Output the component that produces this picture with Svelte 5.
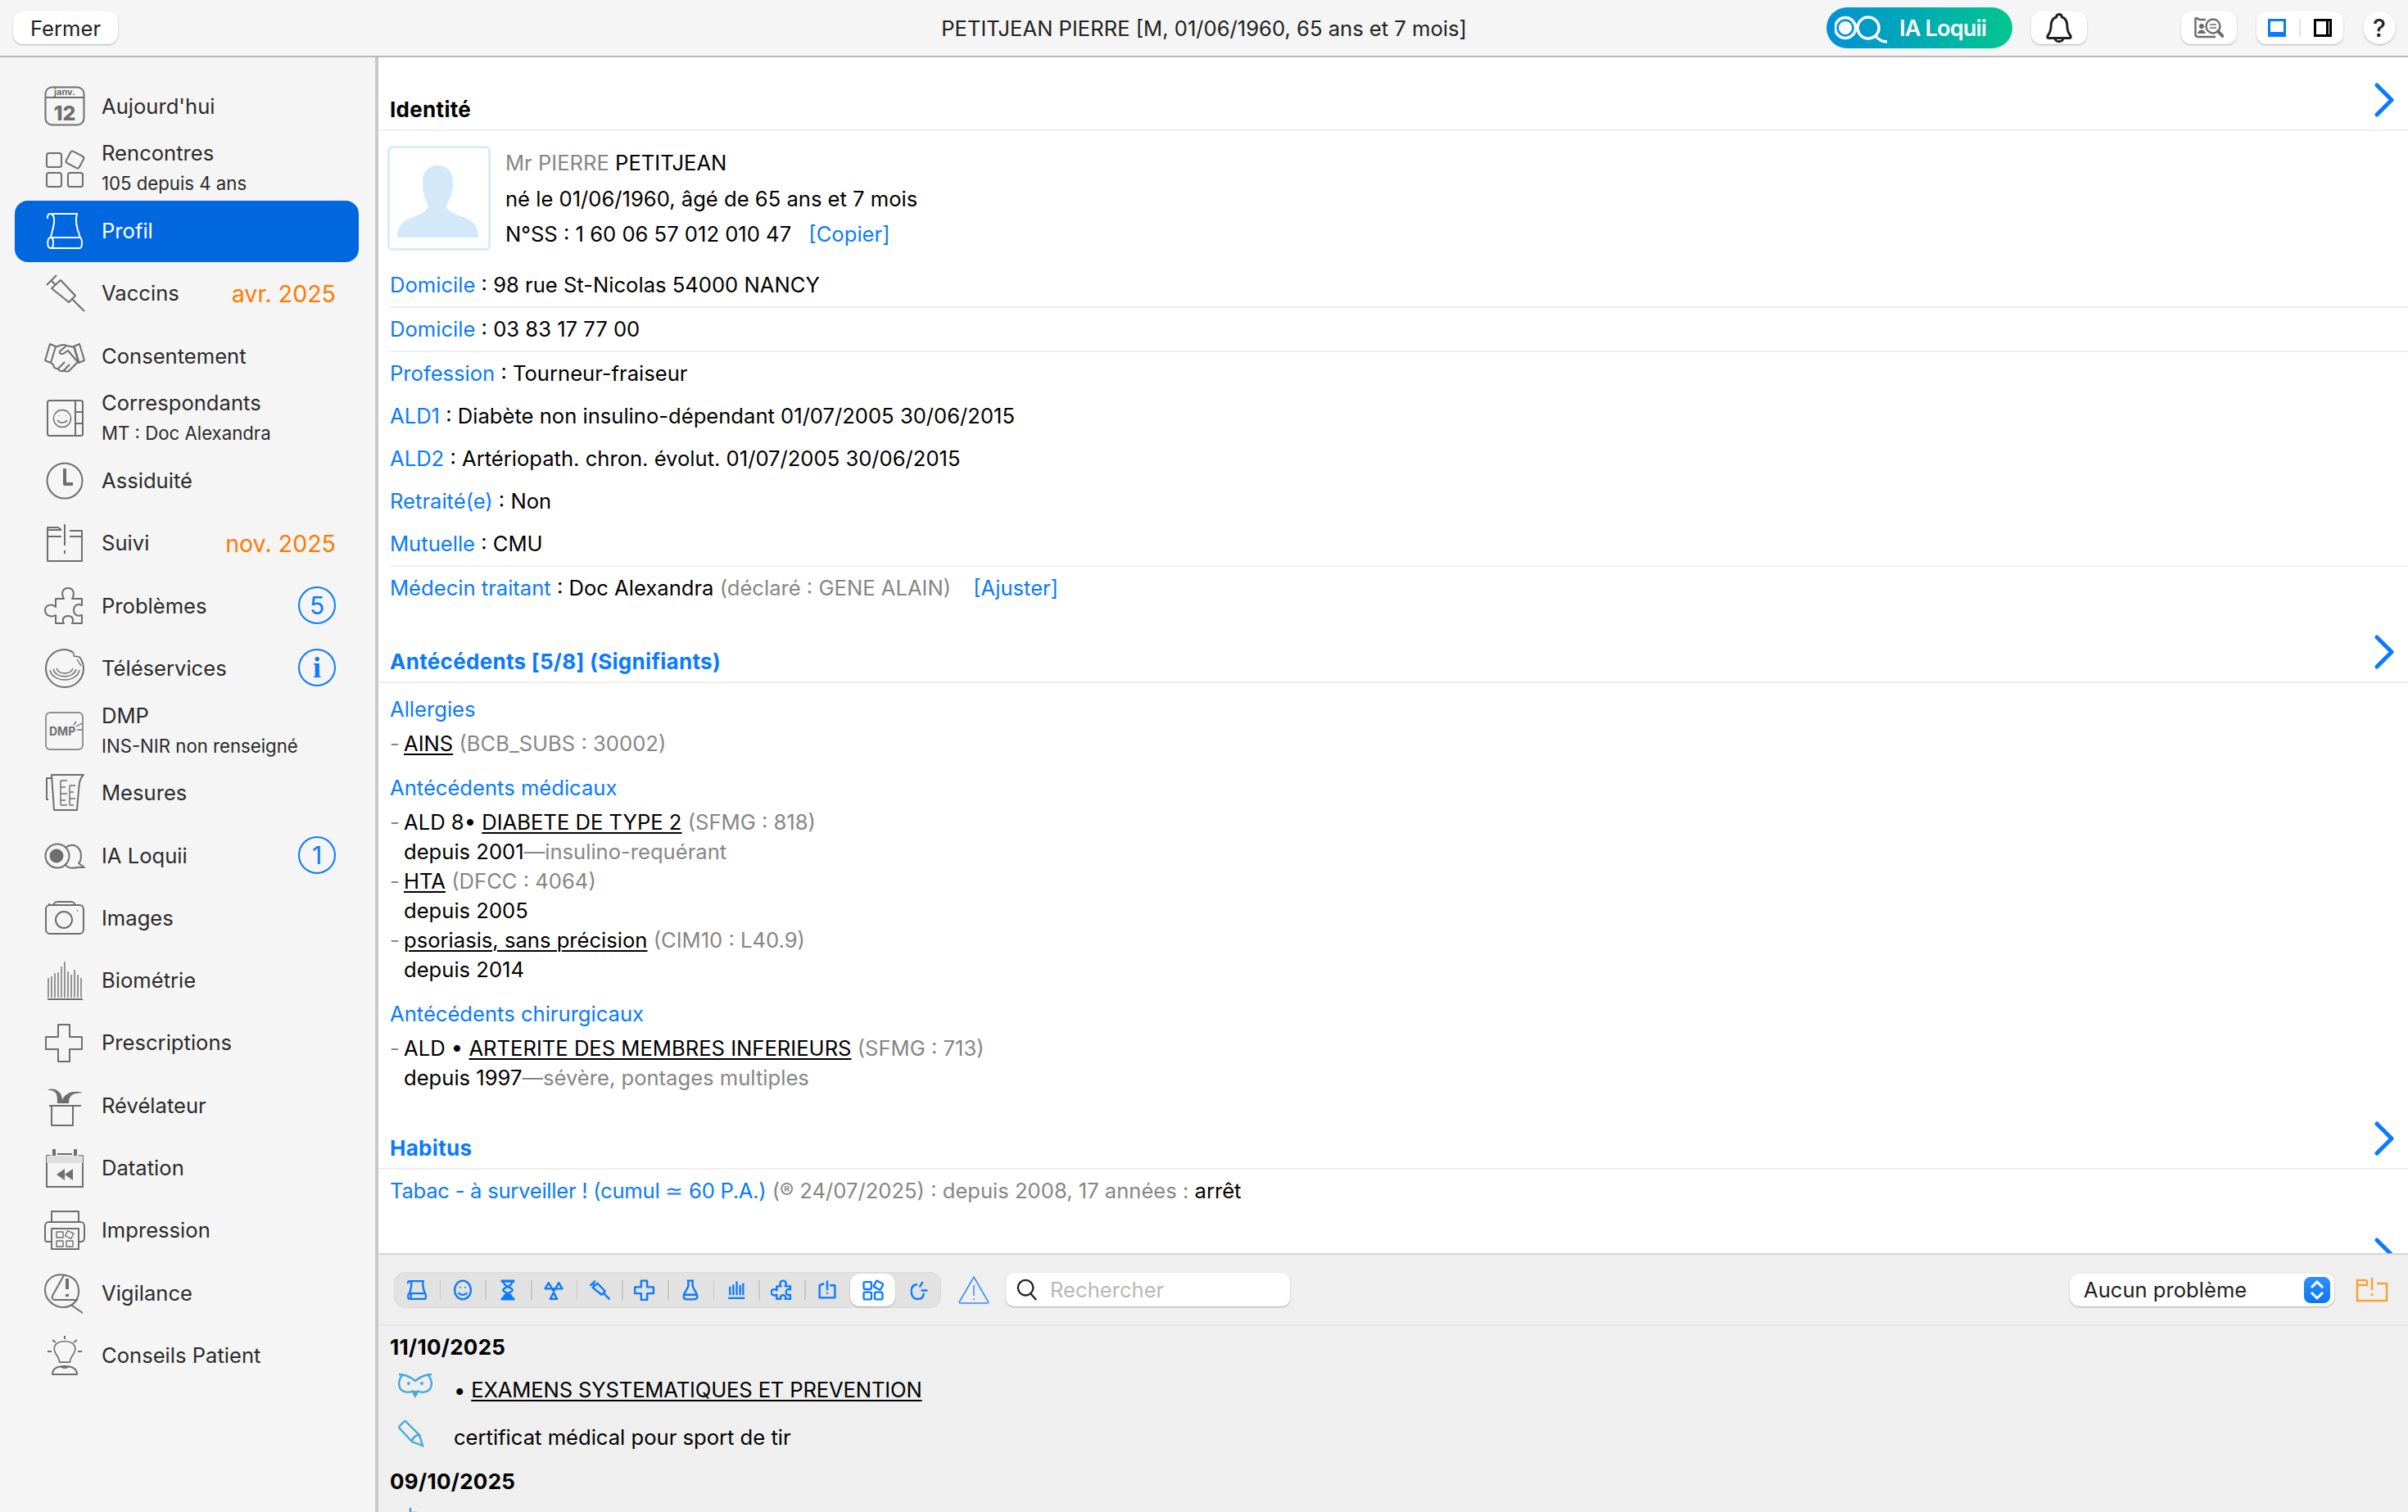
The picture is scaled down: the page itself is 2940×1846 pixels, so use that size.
<script>
  const rows = [
    { icon: 'cal', label: "Aujourd'hui" },
    { icon: 'grid', label: 'Rencontres', sub: '105 depuis 4 ans' },
    { icon: 'scroll', label: 'Profil', active: true },
    { icon: 'syringe', label: 'Vaccins', date: 'avr. 2025' },
    { icon: 'hands', label: 'Consentement' },
    { icon: 'book', label: 'Correspondants', sub: 'MT : Doc Alexandra' },
    { icon: 'clock', label: 'Assiduité' },
    { icon: 'folder', label: 'Suivi', date: 'nov. 2025' },
    { icon: 'puzzle', label: 'Problèmes', badge: '5' },
    { icon: 'tele', label: 'Téléservices', badge: 'i' },
    { icon: 'dmp', label: 'DMP', sub: 'INS-NIR non renseigné' },
    { icon: 'beaker', label: 'Mesures' },
    { icon: 'loqui', label: 'IA Loquii', badge: '1' },
    { icon: 'camera', label: 'Images' },
    { icon: 'bars', label: 'Biométrie' },
    { icon: 'cross', label: 'Prescriptions' },
    { icon: 'hat', label: 'Révélateur' },
    { icon: 'rewind', label: 'Datation' },
    { icon: 'printer', label: 'Impression' },
    { icon: 'vigil', label: 'Vigilance' },
    { icon: 'bulb', label: 'Conseils Patient' }
  ];
  const tools = ['scroll', 'smile', 'hourglass', 'radiation', 'syringe', 'cross', 'flask', 'bars2', 'puzzle', 'folder2', 'grid', 'pointer'];
</script>

{#snippet glyph(n)}
  {#if n === 'cal'}
    <rect x="1.5" y="1.5" width="47" height="46" rx="8" />
    <path d="M1.5 14H48.5" />
    <text x="25" y="11" class="t-cal-m">janv.</text>
    <text x="25" y="42" class="t-cal-d">12</text>
  {:else if n === 'grid'}
    <rect x="3" y="6" width="18" height="17" rx="2.5" />
    <rect x="3" y="30" width="18" height="17" rx="2.5" />
    <rect x="29" y="30" width="18" height="17" rx="2.5" />
    <rect x="28.5" y="6" width="18" height="16" rx="2.5" transform="rotate(28 37.5 14)" />
  {:else if n === 'scroll'}
    <path d="M10 4H40C37 13 40 23 44 33M4 10C3 2 11 2 12 10C13 18 9 26 8 33M8 33H43C47 33 47 46 43 46H8C3 46 3 33 8 33ZM8 33C12 33 12 46 8 46" />
  {:else if n === 'syringe'}
    <path d="M3 15L15 3M8 9L13 14M9 19L20 9L38 28L30 36ZM34 32L49 47" />
  {:else if n === 'hands'}
    <path d="M1 30L7 10L14 13L8 33ZM49 30L43 10L36 13L42 33ZM14 14C20 11 24 10 27 12L37 14L42 31L31 42C28 45 25 43 24 42C21 45 18 42 17 40C14 41 11 38 11 35L8 33M27 12L19 19C18 23 23 23 26 20L29 18L40 31M24 42L31 35M17 40L25 32" />
  {:else if n === 'book'}
    <rect x="4" y="3" width="43" height="43" rx="2.5" />
    <path d="M38 3V46M38 17H47M38 31H47" />
    <circle cx="22" cy="25" r="10.5" class="thin" />
    <path class="thin" d="M16 27C19 31 25 31 28 27M18 21.5h.5M26 21.5h.5" />
  {:else if n === 'clock'}
    <circle cx="25" cy="25" r="21.5" />
    <path class="thick" d="M25 10V29H35" />
  {:else if n === 'folder'}
    <path d="M21 9H4V47H46V10H31M4 17H21M31 17H46M4 9V6H17L21 9" />
    <path d="M25 2V28M25 34V38" />
  {:else if n === 'folder2'}
    <path d="M18 11H12L9 14H7V43H43V14H31M25 3V26M25 31V34" />
  {:else if n === 'puzzle'}
    <path d="M14 16H24C20 9 23 3 29 3C35 3 38 9 34 16H46V24C40 21 36 25 36 30C36 35 40 38 46 36V46H34C37 41 34 37 29 37C24 37 21 41 24 46H14V36C9 39 1 37 1 30C1 24 9 21 14 26Z" />
  {:else if n === 'tele'}
    <path d="M36 6C31 3 28 2 25 2C12 2 2 12 2 25C2 38 12 48 25 48C38 48 48 38 48 25C48 20 46 15 43 11" />
    <path class="thin" d="M36 6L36 10L43 11M40 14L45 22M7 27C10 43 40 43 43 27M11 26C14 38 36 38 39 26M15 25C18 33 32 33 35 25" />
  {:else if n === 'dmp'}
    <rect x="2" y="3" width="45" height="45" rx="5" class="thin" />
    <text x="6" y="31" class="t-dmp">DMP</text>
    <path class="thin" d="M39 20L46 16M40 24L47 24M36 18L39 14" />
  {:else if n === 'beaker'}
    <path d="M9 3H48C43 8 43 12 42 22L40 46H12ZM9 7H3V33H5" />
    <path class="thin" d="M20 10V40M20 10H28M20 18H26M20 26H28M20 34H26M20 40H28M31 16V40M31 16H38M31 24H36M31 32H38M31 40H36" />
  {:else if n === 'loqui'}
    <circle cx="16" cy="25" r="14.5" />
    <circle cx="15" cy="25" r="8.5" class="fill" />
    <path d="M27 14C38 8 45 16 45 25C45 29 44 32 42 34L49 39H40C33 41 28 39 25 35" />
  {:else if n === 'camera'}
    <rect x="2" y="9" width="46" height="35" rx="5" />
    <circle cx="24" cy="27" r="10" />
    <path d="M6 9V7M11 9C13 5 14 5 17 5H32C35 5 36 5 38 9M40 16h1" />
  {:else if n === 'bars'}
    <path class="thin" d="M5 46V22M9 46V20M13 46V16M17 46V15M21 46V8M25 46V2M29 46V14M33 46V18M37 46V12M41 46V18M45 46V22" />
    <path d="M4 48H47" />
  {:else if n === 'bars2'}
    <path d="M10 37V17M18 37V12M26 37V5M34 37V13M41 37V9M6 44H45" />
  {:else if n === 'cross'}
    <path d="M17 3H31V18H46V33H31V48H17V33H2V18H17Z" />
  {:else if n === 'hat'}
    <path d="M6 25H45M9 25V49H35V25" />
    <path class="fill" d="M16 22C16 12 16 6 4 6C10 2 22 6 22 18C26 8 38 6 47 9L39 10C32 11 30 16 30 22Z" />
  {:else if n === 'rewind'}
    <path d="M8 10H3V48H47V10H42M16 8H34" />
    <path class="thick" d="M12 2V12M38 2V12" />
    <rect x="3" y="10" width="44" height="9" class="fillsoft" />
    <path class="fill" d="M15 33L25 26V40ZM25 33L35 26V40Z" />
  {:else if n === 'printer'}
    <path d="M9 15V2H42V15M9 39H3C1 39 1 37 1 35V20C1 17 3 15 5 15H45C47 15 49 17 49 20V35C49 37 47 39 45 39H42M9 23H42V48H9Z" />
    <g class="thin">
      <rect x="15" y="27" width="8" height="7" />
      <rect x="15" y="38" width="8" height="7" />
      <rect x="27" y="38" width="8" height="7" />
      <rect x="27" y="27" width="8" height="7" transform="rotate(25 31 30)" />
    </g>
  {:else if n === 'vigil'}
    <path d="M26 3C12 0 1 8 1 21C1 33 12 42 23 42C36 42 43 32 42 20C41 10 36 5 26 3ZM34 40L47 49" />
    <path d="M24 3L10 28C9 31 10 33 13 33H41" />
    <path class="thick" d="M28 7V20M28 26V29" />
  {:else if n === 'bulb'}
    <path d="M17 37C17 29 9 24 9 17C9 9 16 5 25 5C34 5 41 9 41 17C41 24 33 29 33 37Z" transform="translate(5 3.5) scale(.8)" />
    <path d="M10 48C10 41 16 38 25 38C34 38 40 41 40 48ZM25 1V5M10 6L14 9M40 6L36 9M4 20H9M41 20H46" />
    <path class="fill" d="M19 38H31C30 42 20 42 19 38Z" />
  {:else if n === 'smile'}
    <ellipse cx="25" cy="25" rx="19" ry="22" />
    <path d="M15 31C20 38 30 38 35 31M19 18V20M31 18V20" />
  {:else if n === 'hourglass'}
    <path class="thick" d="M9 4H41M9 46H41" />
    <path d="M14 4C14 18 36 18 36 25C36 32 14 32 14 46M36 4C36 18 14 18 14 25C14 32 36 32 36 46" />
    <path class="fill" d="M25 30L37 46H13Z" />
  {:else if n === 'radiation'}
    <path d="M13 8L5 22H21ZM37 8L29 22H45ZM25 31L17 46H33Z" />
    <circle cx="25" cy="24" r="2.5" />
  {:else if n === 'flask'}
    <path d="M17 3H33M20 3V14C20 22 9 30 9 40C9 45 13 47 17 47H33C37 47 41 45 41 40C41 30 30 22 30 14V3M11 36H39" />
  {:else if n === 'pointer'}
    <path d="M23 12C14 12 9 18 9 28C9 38 14 46 24 46C34 46 38 40 38 32M28 18L36 6M32 26H47" />
  {/if}
{/snippet}

<div class="app">
  <header class="top">
    <div class="top-left"><button class="btn fermer">Fermer</button></div>
    <div class="title">PETITJEAN PIERRE [M, 01/06/1960, 65 ans et 7 mois]</div>
    <div class="top-right">
      <div class="pill">
        <svg class="pill-logo" viewBox="0 0 64 46">
          <circle cx="41" cy="23" r="13" />
          <circle cx="13" cy="23" r="12.5" />
          <circle cx="13" cy="23" r="8" class="pl-dot" />
          <path d="M50 33C54 38 58 40 64 40" />
        </svg>
        <span>IA Loquii</span>
      </div>
      <button class="btn bell" aria-label="Alertes">
        <svg viewBox="0 0 40 46" class="ico-bell">
          <path d="M20 3C23 3 24 5 24 7C30 9 32 14 32 21C32 28 34 31 37 35C38 37 37 38 35 38H5C3 38 2 37 3 35C6 31 8 28 8 21C8 14 10 9 16 7C16 5 17 3 20 3ZM14 38C14 45 26 45 26 38" />
        </svg>
      </button>
      <button class="btn docsearch" aria-label="Dossier">
        <svg viewBox="0 0 36 26" class="ico-doc">
          <path d="M14 3H6L4 1.5H1.5V21C1.5 23 3 24 5 24H26" />
          <circle cx="23" cy="11" r="8.5" />
          <path d="M29 17L34.5 23" class="h" />
          <path class="t" d="M19 9H27M19 13H27" />
          <circle cx="9" cy="11" r="3" class="dark" />
          <path class="dark" d="M4 20C5 14 13 14 14 20Z" />
        </svg>
      </button>
      <div class="btn seg-view">
        <svg viewBox="0 0 22 22" class="ico-view blue"><rect x="1.5" y="1.5" width="19" height="19" /><rect x="3" y="16" width="16" height="3" class="solid" /></svg>
        <i class="v-sep"></i>
        <svg viewBox="0 0 22 22" class="ico-view"><rect x="1.5" y="1.5" width="19" height="19" /><rect x="15" y="3" width="3" height="16" class="solid" /></svg>
      </div>
      <button class="btn help">?</button>
    </div>
  </header>

  <div class="body">
    <nav class="side">
      {#each rows as r}
        <div class="row" class:active={r.active}>
          <svg class="ico" viewBox="0 0 50 50">{@render glyph(r.icon)}</svg>
          <div class="labels">
            <div class="label">{r.label}</div>
            {#if r.sub}<div class="sub">{r.sub}</div>{/if}
          </div>
          {#if r.date}<div class="date">{r.date}</div>{/if}
          {#if r.badge}<div class="badge" class:info={r.badge === 'i'}>{r.badge}</div>{/if}
        </div>
      {/each}
    </nav>

    <main class="main">
      <section class="upper">
        <div class="head">
          <h2>Identité</h2>
          <svg class="chev" viewBox="0 0 26 42"><path d="M4 3L22 21L4 39" /></svg>
        </div>
        <div class="identity">
          <div class="photo">
            <svg viewBox="0 0 120 122"><path d="M40 42C40 27 48 21 58 21C69 21 77 27 77 42C77 55 73 63 69 69C69 75 75 79 87 83C101 88 108 93 108 109H9C9 93 17 88 31 83C41 79 47 75 47 69C43 63 40 55 40 42Z" /></svg>
          </div>
          <div class="id-lines">
            <div><span class="grey">Mr PIERRE</span> PETITJEAN</div>
            <div>né le 01/06/1960, âgé de 65 ans et 7 mois</div>
            <div>N°SS : 1 60 06 57 012 010 47 <a class="copy">[Copier]</a></div>
          </div>
        </div>
        <div class="rows">
          <div class="line sep"><a>Domicile</a> : 98 rue St-Nicolas 54000 NANCY</div>
          <div class="line sep"><a>Domicile</a> : 03 83 17 77 00</div>
          <div class="line"><a>Profession</a> : Tourneur-fraiseur</div>
          <div class="line"><a>ALD1</a> : Diabète non insulino-dépendant 01/07/2005 30/06/2015</div>
          <div class="line"><a>ALD2</a> : Artériopath. chron. évolut. 01/07/2005 30/06/2015</div>
          <div class="line"><a>Retraité(e)</a> : Non</div>
          <div class="line sep"><a>Mutuelle</a> : CMU</div>
          <div class="line"><a>Médecin traitant</a> : Doc Alexandra <span class="grey">(déclaré : GENE ALAIN)</span> <a class="adj">[Ajuster]</a></div>
        </div>

        <div class="head">
          <h2 class="blue-h">Antécédents [5/8] (Signifiants)</h2>
          <svg class="chev" viewBox="0 0 26 42"><path d="M4 3L22 21L4 39" /></svg>
        </div>
        <div class="ant">
          <h3>Allergies</h3>
          <ul>
            <li><b>-</b><u>AINS</u> <span class="grey">(BCB_SUBS : 30002)</span></li>
          </ul>
          <h3>Antécédents médicaux</h3>
          <ul>
            <li><b>-</b>ALD 8• <u>DIABETE DE TYPE 2</u> <span class="grey">(SFMG : 818)</span></li>
            <li class="ind">depuis 2001<span class="grey">—insulino-requérant</span></li>
            <li><b>-</b><u>HTA</u> <span class="grey">(DFCC : 4064)</span></li>
            <li class="ind">depuis 2005</li>
            <li><b>-</b><u>psoriasis, sans précision</u> <span class="grey">(CIM10 : L40.9)</span></li>
            <li class="ind">depuis 2014</li>
          </ul>
          <h3>Antécédents chirurgicaux</h3>
          <ul>
            <li><b>-</b>ALD • <u>ARTERITE DES MEMBRES INFERIEURS</u> <span class="grey">(SFMG : 713)</span></li>
            <li class="ind">depuis 1997<span class="grey">—sévère, pontages multiples</span></li>
          </ul>
        </div>

        <div class="head">
          <h2 class="blue-h">Habitus</h2>
          <svg class="chev" viewBox="0 0 26 42"><path d="M4 3L22 21L4 39" /></svg>
        </div>
        <div class="line"><a class="tight">Tabac - à surveiller ! (cumul ≃ 60 P.A.)</a> <span class="grey">(® 24/07/2025) : depuis 2008, 17 années :</span> arrêt</div>
        <div class="head"><h2>&nbsp;</h2><svg class="chev" viewBox="0 0 26 42"><path d="M4 3L22 21L4 39" /></svg></div>
      </section>

      <section class="lower">
        <div class="toolbar">
          <div class="tools">
            {#each tools as t}
              <div class="tool" class:on={t === 'grid'}>
                <svg viewBox="0 0 50 50">{@render glyph(t)}</svg>
              </div>
            {/each}
          </div>
          <svg class="warn" viewBox="0 0 38 34"><path d="M19 1L1 32C1 33 2 33 3 33H35C36 33 37 33 37 32ZM19 11V24M19 27V29" /></svg>
          <div class="search">
            <svg viewBox="0 0 28 30"><circle cx="12" cy="12" r="10" /><path d="M19 20L26 28" /></svg>
            <span>Rechercher</span>
          </div>
          <div class="select">
            <span>Aucun problème</span>
            <div class="stepper"><svg viewBox="0 0 32 32"><path d="M9 13L16 6L23 13M9 19L16 26L23 19" /></svg></div>
          </div>
          <svg class="orange" viewBox="0 0 40 30"><path d="M14 3H2V28H38V7H26M2 9H14L14 3M20 0V15M20 19V22" /></svg>
        </div>
        <div class="journal">
          <div class="jdate">11/10/2025</div>
          <div class="entry">
            <svg class="e-ico" viewBox="0 0 42 34">
              <path d="M1 2C8 2 14 4 21 10C28 4 34 2 41 2M5 3C0 9 0 17 4 21C9 25 15 24 19 22M37 3C42 9 42 17 38 21C33 25 27 24 23 22" />
              <path class="e-fill" d="M16 22H26L21 31Z" />
              <circle cx="13" cy="13" r="2" class="e-fill" />
              <circle cx="29" cy="13" r="2" class="e-fill" />
            </svg>
            <span class="caps">• <u>EXAMENS SYSTEMATIQUES ET PREVENTION</u></span>
          </div>
          <div class="entry">
            <svg class="e-ico" viewBox="0 0 42 34">
              <path d="M2 7L7 2C8 1 9 1 10 2L26 18L30 31L17 26L2 10C1 9 1 8 2 7ZM17 25C18 21 22 18 26 18" />
            </svg>
            <span>certificat médical pour sport de tir</span>
          </div>
          <div class="jdate second">09/10/2025</div>
          <svg class="e-ico peek" viewBox="0 0 42 34"><path d="M15 2V34M15 8L23 8" /></svg>
        </div>
      </section>
    </main>
  </div>
</div>

<style>
  :global(body) { margin: 0; background: #f5f5f5; }
  .app {
    width: 2940px;
    height: 1846px;
    overflow: hidden;
    display: flex;
    flex-direction: column;
    font-family: Inter, "Liberation Sans", sans-serif;
    font-size: 25.6px;
    color: #000;
  }
  a { color: #0a7aff; }
  u { text-underline-offset: 3px; text-decoration-thickness: 2px; }

  /* top bar */
  .top {
    height: 68px;
    flex: none;
    display: grid;
    grid-template-columns: 1fr auto 1fr;
    align-items: center;
    background: #f5f5f5;
    border-bottom: 2px solid #b9b9b9;
  }
  .top-left { padding-left: 16px; }
  .title { color: #222; }
  .btn {
    display: flex;
    align-items: center;
    justify-content: center;
    height: 40px;
    padding: 0;
    border: 0;
    border-radius: 12px;
    background: #fff;
    box-shadow: 0 1px 2px rgba(0, 0, 0, .28);
    font: inherit;
    color: #222;
    box-sizing: border-box;
  }
  .fermer { width: 128px; }
  .top-right { display: flex; align-items: center; justify-content: flex-end; padding-right: 15px; }
  .pill {
    width: 227px;
    height: 50px;
    border-radius: 25px;
    background: linear-gradient(90deg, #0090d6, #00c68f);
    color: #fff;
    display: flex;
    align-items: center;
    padding-left: 10px;
    box-sizing: border-box;
    font-size: 27px;
    font-weight: 600;
    letter-spacing: -0.8px;
  }
  .pill-logo { width: 64px; height: 46px; margin-right: 15px; fill: none; stroke: #fff; stroke-width: 3.5; }
  .pl-dot { fill: #fff; stroke: none; }
  .bell { width: 68px; margin-left: 23px; }
  .ico-bell { width: 34px; height: 38px; fill: none; stroke: #222; stroke-width: 3.6; stroke-linejoin: round; }
  .docsearch { width: 68px; margin-left: 115px; }
  .ico-doc { width: 36px; height: 26px; fill: none; stroke: #6b6b6b; stroke-width: 2.4; }
  .ico-doc .dark { fill: #6b6b6b; stroke: none; }
  .ico-doc .h { stroke-width: 4; stroke-linecap: round; }
  .ico-doc .t { stroke-width: 1.6; }
  .seg-view { width: 106px; margin-left: 24px; gap: 16px; }
  .ico-view { width: 22px; height: 22px; fill: none; stroke: #000; stroke-width: 3; }
  .ico-view .solid { fill: #000; stroke: none; }
  .ico-view.blue { stroke: #0a7aff; }
  .ico-view.blue .solid { fill: #0a7aff; }
  .v-sep { width: 2px; height: 22px; background: #e2e2e2; }
  .help { width: 40px; margin-left: 24px; border-radius: 20px; font-size: 30px; font-weight: 500; }

  .body { flex: 1; display: flex; min-height: 0; }

  /* sidebar */
  .side {
    width: 458px;
    flex: none;
    box-sizing: border-box;
    padding: 22px 20px 0 18px;
    background: #f5f5f5;
    display: grid;
    grid-auto-rows: 75px;
    row-gap: 1.27px;
    align-content: start;
  }
  .row {
    display: flex;
    align-items: center;
    padding: 0 28px 0 36px;
    border-radius: 16px;
    color: #2b2b2b;
  }
  .row.active { background: #0067de; color: #fff; }
  .ico {
    width: 50px;
    height: 50px;
    flex: none;
    margin-right: 20px;
    fill: none;
    stroke: #6e6e6e;
    stroke-width: 2;
    stroke-linejoin: round;
  }
  .row.active .ico { stroke: #fff; }
  .ico text { stroke: none; fill: #6e6e6e; }
  .t-cal-m { font-size: 11px; font-weight: 700; text-anchor: middle; }
  .t-cal-d { font-size: 25px; font-weight: 800; text-anchor: middle; }
  .t-dmp { font-size: 14px; font-weight: 700; }
  .thin { stroke-width: 1.4; }
  .thick { stroke-width: 4; }
  .fill { fill: currentColor; stroke: none; color: #6e6e6e; }
  .fillsoft { fill: #dedede; stroke: none; }
  .labels { flex: 1; min-width: 0; }
  .label { line-height: 36px; }
  .sub { line-height: 37px; font-size: 22.2px; }
  .date { color: #ff7a00; font-size: 28.6px; }
  .badge {
    width: 46px;
    height: 46px;
    box-sizing: border-box;
    border: 2.5px solid #0a7aff;
    border-radius: 50%;
    color: #0a7aff;
    font-size: 30px;
    display: flex;
    align-items: center;
    justify-content: center;
    position: relative;
    top: -1px;
  }
  .badge.info { font-family: "Liberation Serif", serif; font-weight: 700; font-size: 36px; }

  /* main */
  .main {
    flex: 1;
    min-width: 0;
    display: flex;
    flex-direction: column;
    border-left: 4px solid #c8c8c8;
  }
  .upper {
    height: 1460px;
    flex: none;
    overflow: hidden;
    background: #fff;
    border-bottom: 2px solid #d4d4d4;
  }
  .head {
    height: 90px;
    box-sizing: border-box;
    padding: 0 16px 9px 14px;
    border-bottom: 2px solid #efefef;
    display: flex;
    align-items: flex-end;
    justify-content: space-between;
  }
  h2 { margin: 0; font-size: 26px; line-height: 30px; font-weight: 700; letter-spacing: 0.3px; }
  .blue-h { color: #0a7aff; }
  .chev {
    width: 26px;
    height: 42px;
    margin-bottom: 6px;
    fill: none;
    stroke: #0a7aff;
    stroke-width: 5;
    stroke-linecap: round;
    stroke-linejoin: round;
  }
  .identity { display: flex; padding: 18px 0 14px 11px; }
  .photo {
    width: 126px;
    height: 128px;
    box-sizing: border-box;
    border: 3px solid #d8ecfb;
    border-radius: 6px;
    margin-right: 18px;
  }
  .photo svg { display: block; width: 120px; height: 122px; fill: #d3e9fa; }
  .id-lines { margin-top: -1px; line-height: 43.5px; }
  .grey { color: #868686; }
  .copy { margin-left: 14px; }
  .adj { margin-left: 20px; }
  .tight { letter-spacing: -0.25px; }
  .caps { letter-spacing: -0.15px; }
  .line { height: 52px; line-height: 52px; padding-left: 14px; white-space: nowrap; }
  .line.sep { height: 54px; margin-left: 14px; padding-left: 0; border-bottom: 2px solid #efefef; box-sizing: border-box; }

  .ant { padding: 14px 0 4px 14px; }
  h3 { margin: 0 0 6px; font-size: 25.6px; line-height: 36px; font-weight: 400; color: #0a7aff; }
  ul { list-style: none; margin: 0 0 18px; padding: 0; }
  ul:last-child { margin-bottom: 0; }
  li { line-height: 36px; white-space: nowrap; }
  li b { display: inline-block; width: 17px; font-weight: 400; color: #868686; }
  li.ind { padding-left: 17px; }

  /* lower */
  .lower { flex: 1; min-height: 0; overflow: hidden; background: #efefef; }
  .toolbar {
    height: 87px;
    box-sizing: border-box;
    border-bottom: 2px solid #e8e8e8;
    display: flex;
    align-items: center;
    padding: 0 24px 0 19px;
  }
  .tools {
    width: 668px;
    height: 44px;
    flex: none;
    display: flex;
    align-items: center;
    background: #e2e2e2;
    border-radius: 14px;
    box-shadow: inset 0 0 0 1px #dadada;
  }
  .tool {
    flex: 1;
    height: 40px;
    display: flex;
    align-items: center;
    justify-content: center;
    position: relative;
    border-radius: 12px;
  }
  .tool + .tool::before {
    content: "";
    position: absolute;
    left: 0;
    top: 8px;
    width: 1.5px;
    height: 24px;
    background: #c8c8c8;
  }
  .tool.on { background: #fff; box-shadow: 0 1px 2px rgba(0, 0, 0, .25); }
  .tool.on::before, .tool.on + .tool::before { display: none; }
  .tool svg {
    width: 26px;
    height: 26px;
    fill: none;
    stroke: #0a7aff;
    stroke-width: 4.5;
    stroke-linejoin: round;
  }
  .tool :global(.fill) { color: #0a7aff; }
  .tool :global(.thick) { stroke-width: 6; }
  .warn { width: 38px; height: 34px; margin-left: 21px; fill: none; stroke: #2f8cff; stroke-width: 1.5; }
  .search {
    width: 347px;
    height: 41px;
    margin-left: 20px;
    box-sizing: border-box;
    background: #fff;
    border-radius: 10px;
    box-shadow: 0 1px 2px rgba(0, 0, 0, .3);
    display: flex;
    align-items: center;
    padding-left: 13px;
    color: #b9b9b9;
  }
  .search svg { width: 26px; height: 28px; margin-right: 15px; fill: none; stroke: #222; stroke-width: 2.5; }
  .select {
    width: 323px;
    height: 40px;
    margin-left: auto;
    box-sizing: border-box;
    background: #fff;
    border-radius: 12px;
    box-shadow: 0 1px 2px rgba(0, 0, 0, .3);
    display: flex;
    align-items: center;
    justify-content: space-between;
    padding: 0 5px 0 17px;
    color: #222;
  }
  .stepper { width: 32px; height: 32px; border-radius: 8px; background: linear-gradient(#2f8fff, #0a76f5); }
  .stepper svg { display: block; fill: none; stroke: #fff; stroke-width: 3; }
  .orange { width: 40px; height: 30px; margin-left: 26px; fill: none; stroke: #f7a23b; stroke-width: 2.5; }

  .journal { padding: 8px 0 0 14px; position: relative; }
  .jdate { height: 36px; line-height: 36px; font-weight: 700; font-size: 26px; letter-spacing: 0.3px; margin-bottom: 4px; }
  .jdate.second { margin-top: 8px; margin-bottom: 0; }
  .entry { height: 58px; display: flex; align-items: center; padding-left: 10px; }
  .e-ico { width: 42px; height: 34px; flex: none; margin-right: 26px; margin-top: -6px; fill: none; stroke: #45a8de; stroke-width: 2.4; }
  .e-fill { fill: #45a8de; stroke: none; }
  .peek { display: block; margin: 12px 0 0 10px; stroke: #3c9bea; }
</style>
